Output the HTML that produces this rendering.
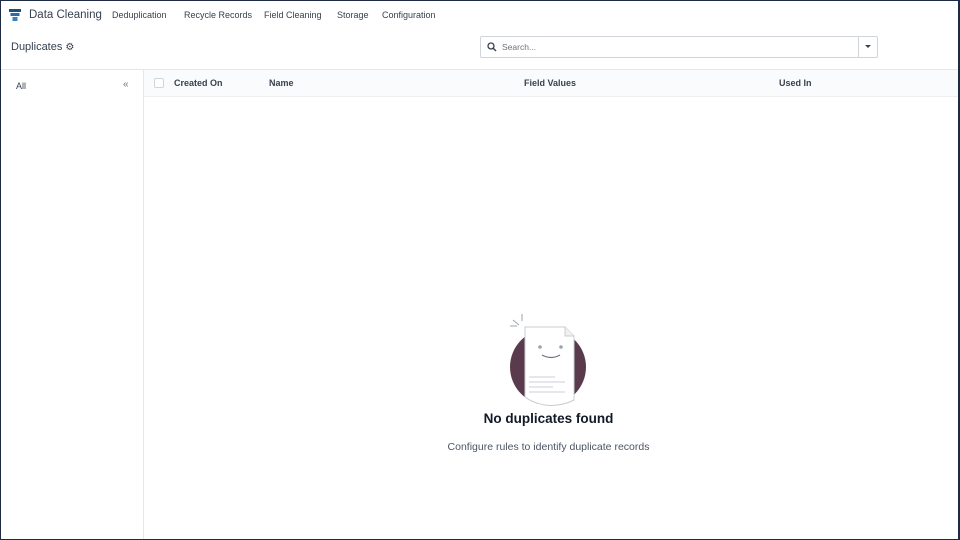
<!DOCTYPE html>
<html><head><meta charset="utf-8"><style>
*{box-sizing:border-box;margin:0;padding:0}
html,body{width:960px;height:540px;overflow:hidden;background:#fff;font-family:"Liberation Sans",sans-serif;color:#374151}
.frame{position:absolute;left:0;top:0;width:960px;height:540px;border:1.5px solid #1f2a44;border-right-width:2px}
.nav{position:absolute;top:0;left:0;right:0;height:31px;font-size:9px;color:#374151}
.nav span{position:absolute;top:10px}
.ctl{position:absolute;left:0;right:0;top:31px;height:39px;border-bottom:1px solid #e5e7eb}
.side{position:absolute;left:0;top:70px;width:144px;bottom:0;border-right:1px solid #e5e7eb}
.th{position:absolute;left:144px;right:0;top:70px;height:27px;border-bottom:1px solid #eceef1;background:#fafbfc;font-size:9px;font-weight:bold;color:#374151}
.th span{position:absolute;top:8px}
</style></head><body>
<div class="nav">
<svg style="position:absolute;left:9px;top:9px" width="12" height="12" viewBox="0 0 12 12"><rect x="0" y="0" width="12" height="3" fill="#1e4f7a"/><rect x="1.5" y="4" width="9" height="3" fill="#2b6ca3"/><rect x="3.5" y="8" width="5" height="4" fill="#3b82c4"/></svg>
<span style="left:29px;top:9px;font-size:11.5px;color:#374151">Data Cleaning</span>
<span style="left:112px">Deduplication</span>
<span style="left:184px">Recycle Records</span>
<span style="left:264px">Field Cleaning</span>
<span style="left:337px">Storage</span>
<span style="left:382px">Configuration</span>
</div>
<div class="ctl">
<span style="position:absolute;left:11px;top:10px;font-size:11px;color:#374151">Duplicates <span style="font-size:10px">⚙</span></span>
<div style="position:absolute;left:480px;top:5px;width:398px;height:22px;border:1px solid #d1d5db;border-radius:2px">
<svg style="position:absolute;left:6px;top:5px" width="10" height="10" viewBox="0 0 10 10"><circle cx="4" cy="4" r="3" fill="none" stroke="#374151" stroke-width="1.3"/><line x1="6.2" y1="6.2" x2="9" y2="9" stroke="#374151" stroke-width="1.4"/></svg>
<span style="position:absolute;left:21px;top:5px;font-size:8.5px;color:#6b7280">Search...</span>
<div style="position:absolute;right:0;top:0;width:19px;height:20px;border-left:1px solid #d1d5db"><div style="position:absolute;left:6px;top:8px;border:3px solid transparent;border-top:3.5px solid #374151"></div></div>
</div>
</div>
<div class="side"><span style="position:absolute;left:16px;top:11px;font-size:9px">All</span><span style="position:absolute;left:123px;top:9px;font-size:10px;color:#6b7280">«</span></div>
<div class="th">
<div style="position:absolute;left:10px;top:8px;width:10px;height:10px;border:1px solid #d1d5db;border-radius:2px;background:#fff"></div>
<span style="left:30px">Created On</span><span style="left:125px">Name</span><span style="left:380px">Field Values</span><span style="left:635px">Used In</span>
</div>
<svg style="position:absolute;left:505px;top:312px" width="90" height="95" viewBox="0 0 90 95">
<circle cx="43" cy="55" r="38" fill="#5a3b4d"/>
<path d="M20 15 L60 15 L69 24 L69 88 Q55 95 40 93 Q28 91 20 85 Z" fill="#fff" stroke="#c9ccd1" stroke-width="1"/>
<path d="M60 15 L60 24 L69 24" fill="#f0f1f3" stroke="#c9ccd1" stroke-width="1"/>
<circle cx="35" cy="35" r="1.8" fill="#9ca3af"/><circle cx="56" cy="35" r="1.8" fill="#9ca3af"/>
<path d="M37 43 Q46 48 55 43" fill="none" stroke="#6b7280" stroke-width="1.2"/>
<g stroke="#e5e7eb" stroke-width="2"><line x1="24" y1="65" x2="50" y2="65"/><line x1="24" y1="70" x2="60" y2="70"/><line x1="24" y1="75" x2="48" y2="75"/><line x1="24" y1="80" x2="60" y2="80"/></g>
<g stroke="#9ca3af" stroke-width="1"><line x1="8" y1="8" x2="14" y2="13"/><line x1="17" y1="2" x2="17" y2="9"/><line x1="5" y1="14" x2="12" y2="14"/></g>
</svg>
<div style="position:absolute;left:0;width:1097px;top:411px;text-align:center;font-size:13.5px;font-weight:bold;color:#111827">No duplicates found</div>
<div style="position:absolute;left:0;width:1097px;top:441px;text-align:center;font-size:10.5px;color:#4b5563">Configure rules to identify duplicate records</div>
<div class="frame"></div>
</body></html>
